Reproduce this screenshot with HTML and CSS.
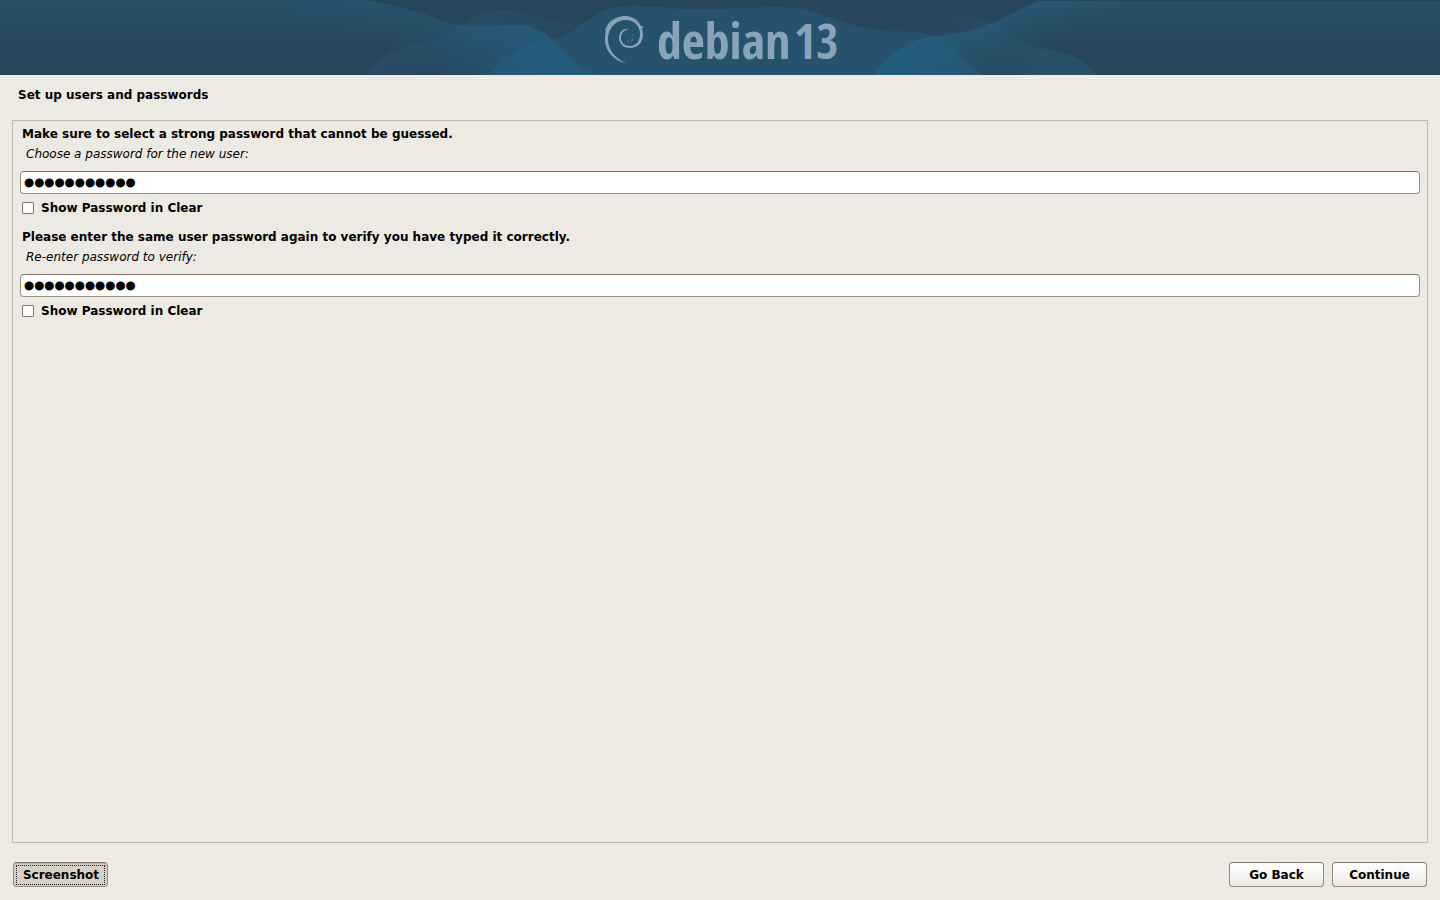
FILE: index.html
```html
<!DOCTYPE html>
<html lang="en">
<head>
  <meta charset="utf-8">
  <title>Set up users and passwords</title>
  <meta name="viewport" content="width=device-width, initial-scale=1.0">
  <link rel="stylesheet" href="styles.css">
</head>
<body>
  <header class="banner">
    <svg class="banner-art" viewBox="0 0 1440 75" preserveAspectRatio="xMidYMid slice" role="img" aria-label="debian 13">
      <defs>
        <linearGradient id="fade" gradientUnits="userSpaceOnUse" x1="0" y1="0" x2="0" y2="48">
          <stop offset="0" stop-color="#265a78" stop-opacity="0.55"/>
          <stop offset="1" stop-color="#265a78" stop-opacity="0"/>
        </linearGradient>
        <linearGradient id="glow-left" gradientUnits="userSpaceOnUse" x1="445" y1="18" x2="425" y2="70">
          <stop offset="0" stop-color="#265a78" stop-opacity="0.4"/>
          <stop offset="1" stop-color="#265a78" stop-opacity="0"/>
        </linearGradient>
        <linearGradient id="glow-right" gradientUnits="userSpaceOnUse" x1="1000" y1="22" x2="1020" y2="60">
          <stop offset="0" stop-color="#265f7c" stop-opacity="0.45"/>
          <stop offset="1" stop-color="#265f7c" stop-opacity="0"/>
        </linearGradient>
        <linearGradient id="hill-left" gradientUnits="userSpaceOnUse" x1="440" y1="20" x2="465" y2="80">
          <stop offset="0" stop-color="#24658c" stop-opacity="0.26"/>
          <stop offset="1" stop-color="#24658c" stop-opacity="0.04"/>
        </linearGradient>
        <linearGradient id="slope-left" gradientUnits="userSpaceOnUse" x1="540" y1="40" x2="430" y2="60">
          <stop offset="0" stop-color="#24658c" stop-opacity="0.36"/>
          <stop offset="1" stop-color="#24658c" stop-opacity="0"/>
        </linearGradient>
        <linearGradient id="hill-right" gradientUnits="userSpaceOnUse" x1="1035" y1="50" x2="980" y2="75">
          <stop offset="0" stop-color="#265f7c" stop-opacity="0.42"/>
          <stop offset="1" stop-color="#265f7c" stop-opacity="0.08"/>
        </linearGradient>
        <linearGradient id="foot-right" gradientUnits="userSpaceOnUse" x1="890" y1="50" x2="1010" y2="75">
          <stop offset="0" stop-color="#24658c" stop-opacity="0.34"/>
          <stop offset="1" stop-color="#24658c" stop-opacity="0"/>
        </linearGradient>
      </defs>

      <rect width="1440" height="75" fill="#28465b"/>

      <!-- outer slopes -->
      <path fill="url(#fade)" d="M0 0H363C395 5 418 11 440 20C470 31 490 25 515 25C540 25 549 37 560 48C572 61 580 70 600 75H0Z"/>
      <path fill="url(#glow-left)" d="M0 0H363C395 5 418 11 440 20C470 31 490 25 515 25C540 25 549 37 560 48C572 61 580 70 600 75H0Z"/>
      <path fill="url(#slope-left)" d="M0 0H363C395 5 418 11 440 20C470 31 490 25 515 25C540 25 549 37 560 48C572 61 580 70 600 75H0Z"/>
      <path fill="url(#fade)" d="M873 75C905 37 925 38 945 35C985 30 1000 20 1037 1H1440V75Z"/>
      <path fill="url(#glow-right)" d="M873 75C905 37 925 38 945 35C985 30 1000 20 1037 1H1440V75Z"/>
      <path fill="url(#foot-right)" d="M873 75C905 37 925 38 945 35C985 30 1000 20 1037 1V75Z"/>

      <!-- hills -->
      <path fill="url(#hill-left)" d="M365 75C392 40 420 47 445 36C465 28 473 10 500 10C530 10 545 24 590 24L552 41L488 75Z"/>
      <path fill="#24658c" fill-opacity="0.4" d="M488 75C520 38 540 46 565 35C590 24 594 6 630 6C665 5 670 11 720 9C765 7 790 5 810 11C835 18 848 24 865 28C893 34 915 29 932 36C950 44 961 61 983 75Z"/>
      <path fill="url(#hill-right)" d="M850 25C870 29 900 30 925 21C955 11 975 13 991 23C1005 32 1017 43 1040 48C1070 53 1082 58 1097 75H983C961 61 950 44 932 36C915 29 893 34 865 28Z"/>

      <!-- swirl -->
      <g fill="#89a3b9">
        <path d="M626 63C615 61 605 52 605 39C605 25 614 16 625 16C635 16 643 24 643 34C643 43 637 48 630 48C623 48 619 43 619 38C619 32 623 28 629 29C624 30 621 33 621 38C621 43 625 46 630 46C636 46 640 41 640 34C640 26 634 20 626 20C616 20 608 28 608 39C608 49 614 58 626 63Z"/>
        <path d="M605 30L608 24L611 21L618 17L616 21L610 27L607 34Z"/>
        <circle cx="642" cy="27" r="1"/>
        <circle cx="633" cy="35" r="0.6"/>
        <circle cx="632" cy="40" r="0.7"/>
        <circle cx="628" cy="41" r="0.6"/>
      </g>

      <text class="brand" x="657" y="59">debian</text>
      <text class="brand version" x="794" y="59">13</text>
    </svg>
  </header>

  <form class="installer">
    <h1>Set up users and passwords</h1>

    <main class="panel">
      <section class="question">
        <h2>Make sure to select a strong password that cannot be guessed.</h2>
        <label class="prompt" for="password">Choose a password for the new user:</label>
        <input class="field" type="password" id="password" value="debianuser1">
        <div class="toggle">
          <input type="checkbox" id="show-password">
          <label for="show-password">Show Password in Clear</label>
        </div>
      </section>

      <section class="question">
        <h2>Please enter the same user password again to verify you have typed it correctly.</h2>
        <label class="prompt" for="verify">Re-enter password to verify:</label>
        <input class="field" type="password" id="verify" value="debianuser1">
        <div class="toggle">
          <input type="checkbox" id="show-verify">
          <label for="show-verify">Show Password in Clear</label>
        </div>
      </section>
    </main>

    <footer class="actions">
      <button type="button" class="pressed"><span>Screenshot</span></button>
      <div class="nav">
        <button type="button">Go Back</button>
        <button type="submit">Continue</button>
      </div>
    </footer>
  </form>
</body>
</html>
```

FILE: styles.css
```css
* {
  box-sizing: border-box;
  margin: 0;
  padding: 0;
}

body {
  display: flex;
  flex-direction: column;
  min-height: 100vh;
  background-color: #edeae3;
  color: #000;
  font-family: "DejaVu Sans", sans-serif;
  font-size: 12px;
  line-height: 16px;
}

/* Banner */
.banner {
  height: 75px;
  background-color: #28465b;
}

.banner-art {
  display: block;
  width: 100%;
  height: 100%;
}

.brand {
  fill: #89a3b9;
  font-family: "Liberation Sans Narrow", "Open Sans Condensed", "DejaVu Sans Condensed", sans-serif;
  font-size: 50px;
  font-weight: bold;
}

.version {
  font-size: 48px;
}

/* Page */
.installer {
  flex: 1;
  display: flex;
  flex-direction: column;
  padding: 12px 12px 13px;
}

h1 {
  padding-left: 6px;
  font-size: 12px;
  line-height: 16px;
}

.panel {
  flex: 1;
  margin: 17px 0 19px;
  padding: 5px 7px;
  border: 1px solid #c0b8a8;
}

/* Questions */
.question {
  display: flex;
  flex-direction: column;
  margin-bottom: 13px;
}

h2 {
  padding-left: 2px;
  font-size: 12px;
  line-height: 16px;
}

.prompt {
  margin: 4px 0 9px;
  padding-left: 6px;
  font-style: italic;
}

.field {
  width: 100%;
  height: 23px;
  padding: 1px 3px 0;
  border: 1px solid #9a9080;
  border-top-color: #7b6f64;
  border-radius: 4px;
  outline: none;
  background-color: #fff;
  color: #000;
  /* the masking dots need a larger size than the labels */
  font-family: "Liberation Sans", sans-serif;
  font-size: 29px;
  line-height: 20px;
  -webkit-text-stroke: 1px #000;
}

.toggle {
  display: flex;
  align-items: center;
  gap: 7px;
  margin-top: 6px;
  padding-left: 2px;
  font-weight: bold;
}

.toggle input {
  appearance: none;
  width: 12px;
  height: 12px;
  border: 1px solid #857668;
  border-radius: 1px;
  background-color: #fff;
}

.toggle input:checked {
  background-color: #857668;
}

/* Buttons */
.actions {
  display: flex;
  justify-content: space-between;
  padding: 0 1px;
}

.nav {
  display: flex;
  gap: 8px;
}

button {
  width: 95px;
  height: 25px;
  border: 1px solid #9a8c7c;
  border-top-color: #857868;
  border-radius: 4px;
  background: linear-gradient(#fefefe, #f6f4f1 60%, #e8e4de);
  box-shadow: 0 0 1px #cfc8bd;
  color: #000;
  font-family: "DejaVu Sans", sans-serif;
  font-size: 12px;
  font-weight: bold;
}

.pressed {
  padding: 2px;
  background: #d8d0c5;
  box-shadow: inset 0 1px 1px #b9aea0;
}

.pressed span {
  display: block;
  padding: 1px 0 0 1px;
  border: 1px dotted #222;
  line-height: 17px;
}
```
